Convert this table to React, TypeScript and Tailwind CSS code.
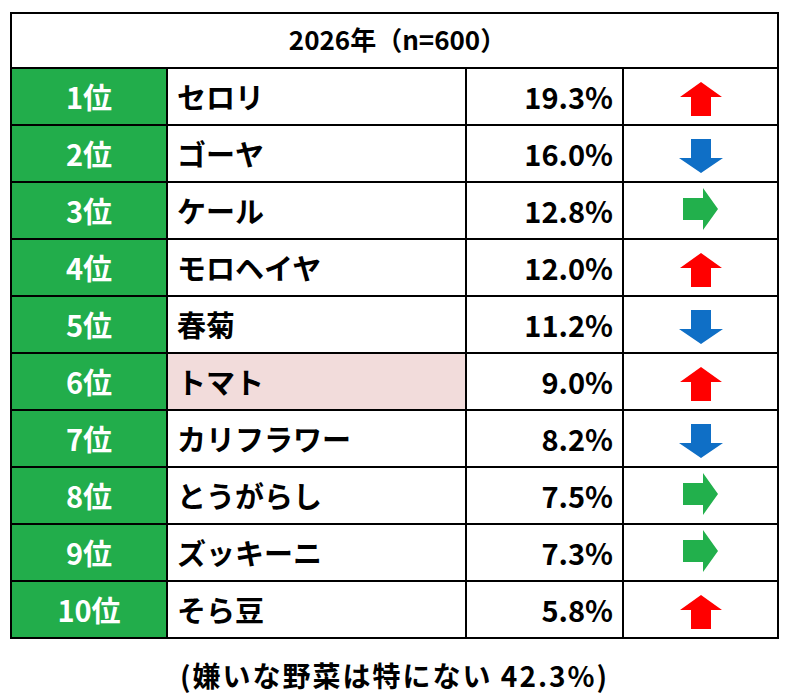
const rows = [
	{ rank: "1位", name: "セロリ", pct: "19.3%", dir: "up" },
	{ rank: "2位", name: "ゴーヤ", pct: "16.0%", dir: "down" },
	{ rank: "3位", name: "ケール", pct: "12.8%", dir: "right" },
	{ rank: "4位", name: "モロヘイヤ", pct: "12.0%", dir: "up" },
	{ rank: "5位", name: "春菊", pct: "11.2%", dir: "down" },
	{ rank: "6位", name: "トマト", pct: "9.0%", dir: "up", hl: true },
	{ rank: "7位", name: "カリフラワー", pct: "8.2%", dir: "down" },
	{ rank: "8位", name: "とうがらし", pct: "7.5%", dir: "right" },
	{ rank: "9位", name: "ズッキーニ", pct: "7.3%", dir: "right" },
	{ rank: "10位", name: "そら豆", pct: "5.8%", dir: "up" },
];

function Arrow({ dir }: { dir: string }) {
	if (dir === "up") {
		return (
			<svg width="42" height="34" viewBox="0 0 42 34" className="mt-1">
				<path d="M21 0 L42 15 L31 15 L31 34 L11 34 L11 15 L0 15 Z" fill="#ff0000" />
			</svg>
		);
	}
	if (dir === "down") {
		return (
			<svg width="44" height="34" viewBox="0 0 44 34" className="mt-1">
				<path d="M12 0 L32 0 L32 19 L44 19 L22 34 L0 19 L12 19 Z" fill="#0f6fc6" />
			</svg>
		);
	}
	return (
		<svg width="35" height="42" viewBox="0 0 35 42" className="-mt-1">
			<path d="M0 10 L20 10 L20 0 L35 21 L20 42 L20 32 L0 32 Z" fill="#22b04c" />
		</svg>
	);
}

export default function App() {
	return (
		<div
			className="w-[796px] h-[698px] bg-white pt-[12px] pl-[10px] text-black"
			style={{ fontFamily: '"Noto Sans CJK JP", "Noto Sans", sans-serif' }}
		>
			<div className="w-[769px] bg-black p-[2px] grid grid-cols-[154px_297px_155px_153px] gap-[2px]">
				<div className="col-span-4 bg-white h-[53px] flex items-center justify-center text-[26px] font-bold pb-1 pl-[6px]">
					2026年（n=600）
				</div>
				{rows.map((r) => (
					<div key={r.rank} className="contents">
						<div className="bg-[#22ad4b] h-[55px] flex items-center justify-center text-white text-[29px] font-bold">
							{r.rank}
						</div>
						<div
							className={`h-[55px] flex items-center pl-[9px] text-[29px] font-bold ${
								r.hl ? "bg-[#f2dcdb]" : "bg-white"
							}`}
						>
							{r.name}
						</div>
						<div className="bg-white h-[55px] flex items-center justify-end pr-[9px] text-[29px] font-bold">
							{r.pct}
						</div>
						<div className="bg-white h-[55px] flex items-center justify-center">
							<Arrow dir={r.dir} />
						</div>
					</div>
				))}
			</div>
			<div className="w-[769px] text-center mt-[15px] text-[28px] font-bold tracking-[2px]">
				(嫌いな野菜は特にない 42.3%)
			</div>
		</div>
	);
}
